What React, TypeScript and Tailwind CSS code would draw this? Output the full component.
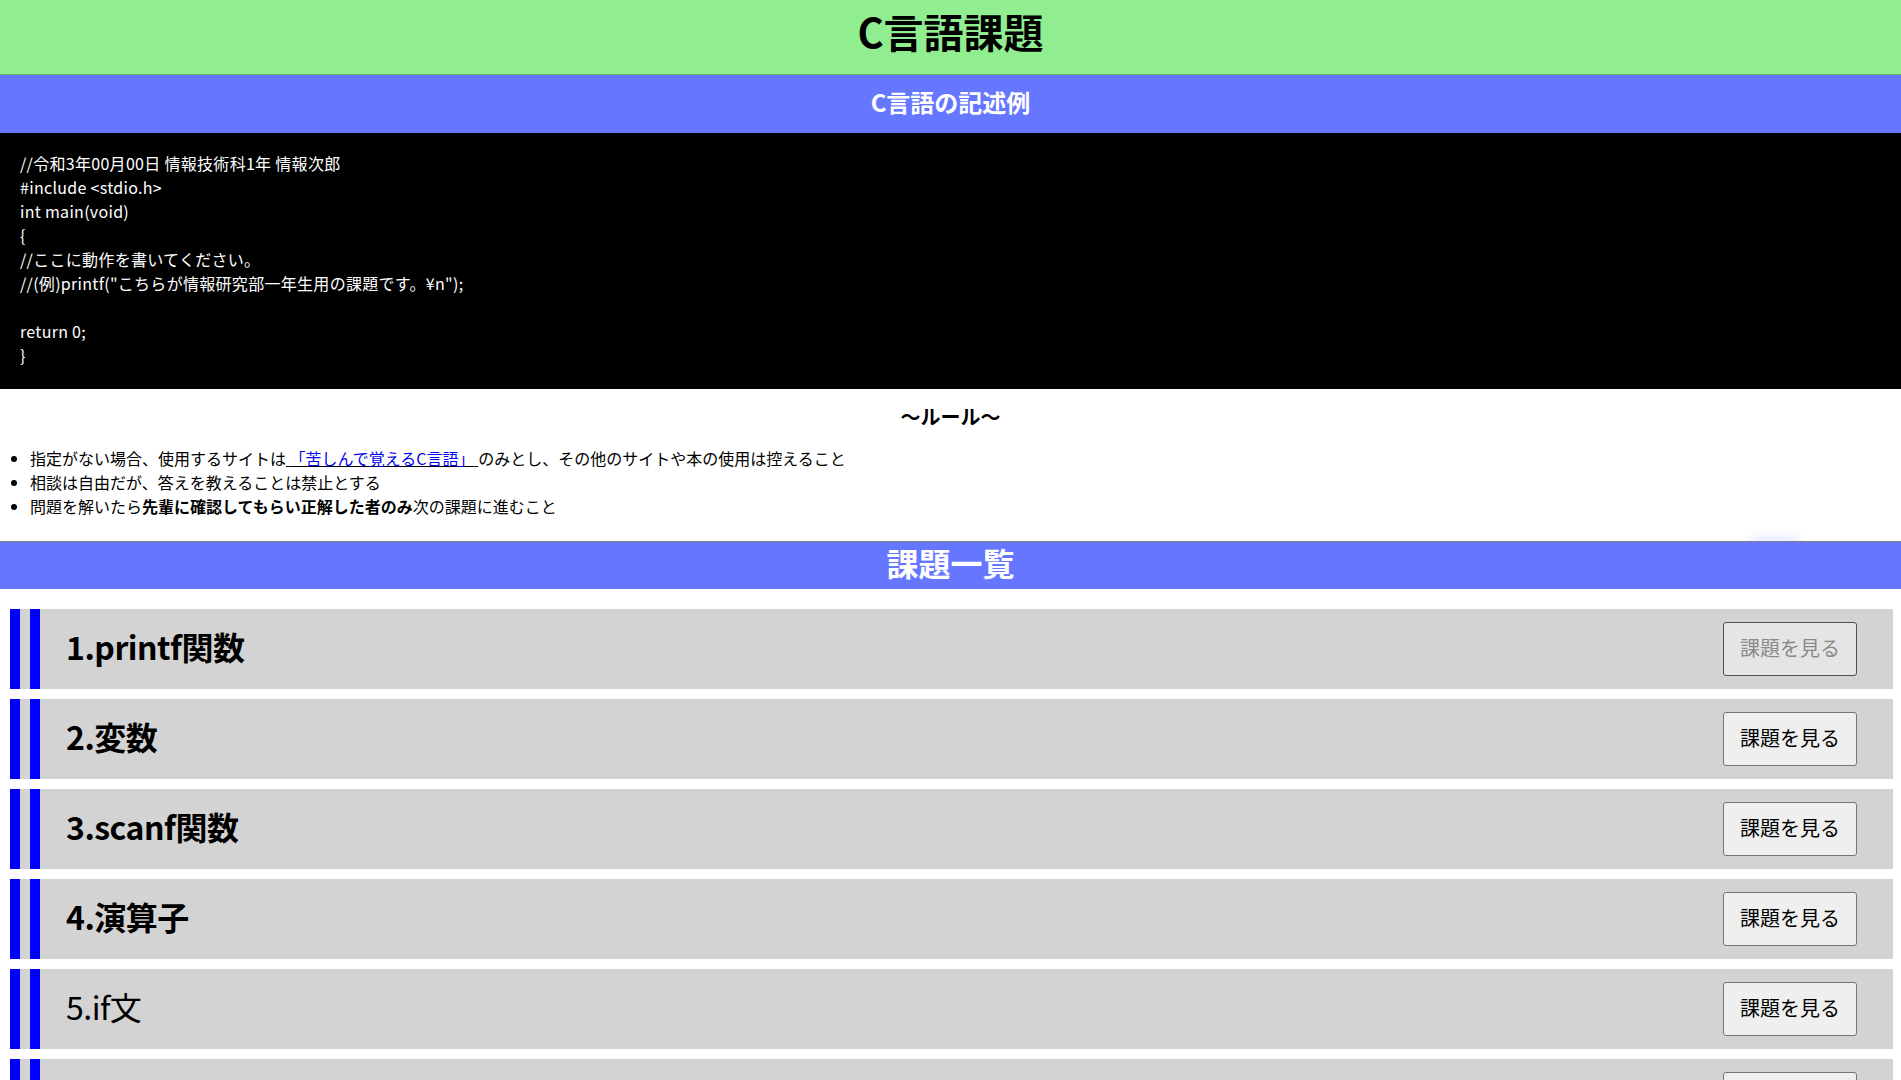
const font = { fontFamily: '"Noto Sans CJK JP", "Noto Sans", sans-serif' };

const codeLines = [
  "//令和3年00月00日 情報技術科1年 情報次郎",
  "#include <stdio.h>",
  "int main(void)",
  "{",
  "//ここに動作を書いてください。",
  '//(例)printf("こちらが情報研究部一年生用の課題です。¥n");',
  "",
  "return 0;",
  "}",
];

const kadai = [
  { title: "1.printf関数", bold: true, hover: true },
  { title: "2.変数", bold: true },
  { title: "3.scanf関数", bold: true },
  { title: "4.演算子", bold: true },
  { title: "5.if文", bold: false },
  { title: "6.switch文", bold: false },
  { title: "7.for文", bold: false },
  { title: "8.while文", bold: false },
];

type KadaiProps = { title: string; bold: boolean; hover?: boolean };

const KadaiItem = ({ title, bold, hover }: KadaiProps) => {
  return (
    <div className="ml-[10px] mr-[8px] h-[80px] flex items-center bg-[#d3d3d3] border-l-[10px] border-[#0000ff]">
      <div className="h-full ml-[10px] border-l-[10px] border-[#0000ff]" />
      <h3 className={`ml-[26px] -mt-[7px] text-[32px] leading-none tracking-[-0.5px] text-black ${bold ? "font-bold" : "font-normal"}`}>{title}</h3>
      <button
        className={`ml-auto mr-[36px] w-[134px] h-[54px] pb-[2px] rounded-[3px] border text-[20px] ${
          hover ? "bg-[#e5e5e5] border-[#4f4f4f] text-[#8a8a8a]" : "bg-[#efefef] border-[#767676] text-black"
        }`}
      >
        課題を見る
      </button>
    </div>
  );
};

export default function App() {
  return (
    <div className="w-full min-h-screen bg-white text-black" style={font}>
      <header className="h-[75px] bg-[#90ee90] border-b border-[#5cb85c] flex items-center justify-center">
        <h1 className="text-[40px] font-bold leading-none -mt-[12px]">C言語課題</h1>
      </header>

      <div className="h-[58px] bg-[#6677ff] flex items-center justify-center">
        <h2 className="text-[24px] font-bold text-white leading-none -mt-[4px]">C言語の記述例</h2>
      </div>

      <div className="bg-black text-white px-[20px] pt-[18px] pb-[22px] text-[16px] leading-[24px] h-[256px] tracking-[0.3px]">
        {codeLines.map((line, i) => (
          <p key={i} className="h-[24px] whitespace-pre">{line}</p>
        ))}
      </div>

      <div className="pt-[13px] pb-[23px]">
        <h3 className="text-center text-[20px] font-bold leading-[30px]">〜ルール〜</h3>
        <ul className="mt-[14px] list-disc pl-[30px] text-[16px] leading-[24px]">
          <li>
            指定がない場合、使用するサイトは
            <a href="#" className="text-[#0000ee] underline decoration-black">
              {" "}「苦しんで覚えるC言語」{" "}
            </a>
            のみとし、その他のサイトや本の使用は控えること
          </li>
          <li>相談は自由だが、答えを教えることは禁止とする</li>
          <li>
            問題を解いたら<b className="font-bold">先輩に確認してもらい正解した者のみ</b>次の課題に進むこと
          </li>
        </ul>
      </div>

      <div className="relative border-t border-[#808080] bg-[#6677ff] h-[48px] flex items-center justify-center">
        <div className="absolute left-[1750px] -top-[6px] w-[50px] h-[12px] rounded-full bg-[#6677ff] opacity-15 blur-[5px]" />
        <h2 className="text-[32px] font-bold text-white leading-none -mt-[8px]">課題一覧</h2>
      </div>

      <div className="pt-[20px] flex flex-col gap-[10px] pb-[20px]">
        {kadai.map((k) => (
          <KadaiItem key={k.title} title={k.title} bold={k.bold} hover={k.hover} />
        ))}
      </div>
    </div>
  );
}
